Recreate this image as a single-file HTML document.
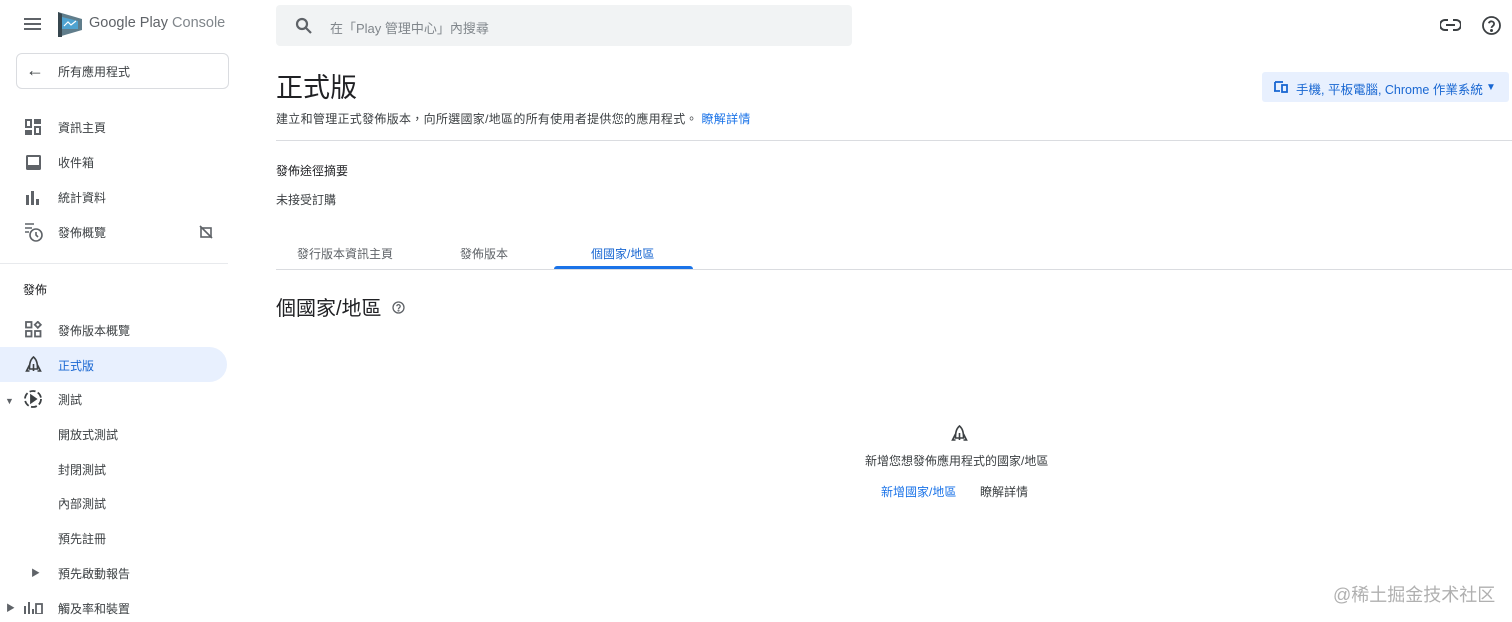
<!DOCTYPE html>
<html><head><meta charset="utf-8"><style>
*{margin:0;padding:0;box-sizing:border-box}
body{width:1512px;height:622px;overflow:hidden;background:#fff;font-family:"Liberation Sans","Noto Sans CJK TC",sans-serif;color:#3c4043;position:relative}
.a{position:absolute;white-space:nowrap}
.nav{font-size:12px;color:#3c4043}
.ic{position:absolute}
</style></head><body>
<svg class="ic" style="left:24px;top:17px" width="18" height="14"><rect y="1" width="17" height="2" fill="#5f6368"/><rect y="6" width="17" height="2" fill="#5f6368"/><rect y="11" width="17" height="2" fill="#5f6368"/></svg>
<svg class="ic" style="left:57px;top:11px" width="26" height="27"><path d="M1 1 L25 8 L25 19 L1 26Z" fill="#607d8b"/><path d="M5 6 L21 10 L21 18 L5 18Z" fill="#4fa3d1"/><path d="M7 15 L11 11 L14 14 L19 10" stroke="#fff" stroke-width="1.2" fill="none"/><path d="M1 1 L1 26 L5 26 L5 3Z" fill="#37474f"/></svg>
<div class="a" style="left:89px;top:15px;font-size:14.5px;color:#5f6368">Google Play <span style="color:#80868b">Console</span></div>
<div class="a" style="left:16px;top:53px;width:213px;height:36px;border:1px solid #dadce0;border-radius:6px"></div>
<div class="a" style="left:26px;top:60px;font-size:18px;color:#3c4043">←</div>
<div class="a nav" style="left:58px;top:63px">所有應用程式</div>
<svg class="ic" style="left:25px;top:119px" width="17" height="17" fill="#5f6368"><rect x="0" y="0" width="7" height="9"/><rect x="9" y="0" width="7" height="5"/><rect x="0" y="11" width="7" height="5"/><rect x="9" y="7" width="7" height="9"/><rect x="2" y="2" width="3" height="5" fill="#fff"/><rect x="11" y="9" width="3" height="5" fill="#fff"/></svg>
<div class="a nav" style="left:58px;top:119px">資訊主頁</div>
<svg class="ic" style="left:25px;top:154px" width="17" height="17"><rect x="1" y="1" width="15" height="15" rx="1.5" fill="#5f6368"/><rect x="3" y="3" width="11" height="8" fill="#fff"/></svg>
<div class="a nav" style="left:58px;top:154px">收件箱</div>
<svg class="ic" style="left:25px;top:189px" width="17" height="17" fill="#5f6368"><rect x="1" y="6" width="3" height="10"/><rect x="6" y="2" width="3" height="14"/><rect x="11" y="10" width="3" height="6"/></svg>
<div class="a nav" style="left:58px;top:189px">統計資料</div>
<svg class="ic" style="left:24px;top:222px" width="21" height="21" fill="none" stroke="#5f6368" stroke-width="1.6"><path d="M1 2h9M1 6h7M1 10h4"/><circle cx="12" cy="13" r="6"/><path d="M12 10v3l2 2"/></svg>
<div class="a nav" style="left:58px;top:224px">發佈概覽</div>
<svg class="ic" style="left:199px;top:225px" width="14" height="14" fill="none" stroke="#5f6368" stroke-width="1.6"><rect x="2" y="3" width="10" height="9"/><path d="M1 1l12 12"/></svg>
<div class="a" style="left:0;top:263px;width:228px;height:1px;background:#e8eaed"></div>
<div class="a nav" style="left:23px;top:281px;color:#202124">發佈</div>
<svg class="ic" style="left:25px;top:321px" width="17" height="17" fill="none" stroke="#5f6368" stroke-width="1.8"><rect x="1" y="1" width="5.5" height="5.5"/><rect x="1" y="10" width="5.5" height="5.5"/><rect x="10" y="10" width="5.5" height="5.5"/><path d="M12.8 0.8l3 3-3 3-3-3z"/></svg>
<div class="a nav" style="left:58px;top:322px">發佈版本概覽</div>
<div class="a" style="left:0;top:347px;width:227px;height:35px;background:#e8f0fe;border-radius:0 18px 18px 0"></div>
<svg class="ic" style="left:25px;top:356px" width="17" height="17" fill="none" stroke="#3c4043" stroke-width="1.6"><path d="M8.5 1C5 4 4.5 8 4.5 13h8c0-5-.5-9-4-12z"/><path d="M4.5 9L1.5 15h3M12.5 9l3 6h-3M8.5 8v7"/></svg>
<div class="a nav" style="left:58px;top:357px;color:#1967d2">正式版</div>
<div class="a" style="left:5px;top:396px;font-size:9px;color:#5f6368">▼</div>
<svg class="ic" style="left:23px;top:389px" width="20" height="20" fill="none" stroke="#3c4043" stroke-width="1.8"><circle cx="10" cy="10" r="8" stroke-dasharray="6 2.5"/><path d="M8 6.5v7l5-3.5z" fill="#3c4043"/></svg>
<div class="a nav" style="left:58px;top:391px">測試</div>
<div class="a nav" style="left:58px;top:426px">開放式測試</div>
<div class="a nav" style="left:58px;top:461px">封閉測試</div>
<div class="a nav" style="left:58px;top:495px">內部測試</div>
<div class="a nav" style="left:58px;top:530px">預先註冊</div>
<div class="a" style="left:31px;top:566px;font-size:9px;color:#5f6368">▶</div>
<div class="a nav" style="left:58px;top:565px">預先啟動報告</div>
<div class="a" style="left:6px;top:601px;font-size:9px;color:#5f6368">▶</div>
<svg class="ic" style="left:23px;top:600px" width="20" height="14" fill="#5f6368"><rect x="1" y="6" width="2" height="8"/><rect x="5" y="2" width="2" height="12"/><rect x="9" y="9" width="2" height="5"/><rect x="13" y="4" width="6" height="10" fill="none" stroke="#5f6368" stroke-width="1.8"/></svg>
<div class="a nav" style="left:58px;top:600px">觸及率和裝置</div>
<div class="a" style="left:276px;top:5px;width:576px;height:41px;background:#f1f3f4;border-radius:4px"></div>
<svg class="ic" style="left:295px;top:17px" width="18" height="18" fill="none" stroke="#5f6368" stroke-width="2.2"><circle cx="7" cy="7" r="5"/><path d="M11 11l5 5"/></svg>
<div class="a" style="left:330px;top:18px;font-size:13px;color:#80868b">在「Play 管理中心」內搜尋</div>
<svg class="ic" style="left:1440px;top:18px" width="21" height="14" fill="none" stroke="#3c4043" stroke-width="2"><path d="M8 2H5a5 5 0 000 10h3M13 2h3a5 5 0 010 10h-3M6 7h9"/></svg>
<svg class="ic" style="left:1481px;top:15px" width="21" height="21" fill="none" stroke="#3c4043" stroke-width="1.8"><circle cx="10.5" cy="10.5" r="8.5"/><path d="M7.8 8.3a2.7 2.7 0 015.3.6c0 2-2.6 2.2-2.6 4" /><circle cx="10.5" cy="15.5" r=".6" fill="#3c4043"/></svg>
<div class="a" style="left:276px;top:66px;font-size:27px;color:#202124">正式版</div>
<div class="a" style="left:276px;top:110px;font-size:12px;color:#3c4043;letter-spacing:.3px">建立和管理正式發佈版本，向所選國家/地區的所有使用者提供您的應用程式。 <span style="color:#1a73e8">瞭解詳情</span></div>
<div class="a" style="left:1262px;top:72px;width:247px;height:30px;background:#e8f0fe;border-radius:3px"></div>
<svg class="ic" style="left:1273px;top:81px" width="15" height="12" fill="none" stroke="#1967d2" stroke-width="1.8"><path d="M2 1v9M1 10h6"/><path d="M2 1h8"/><rect x="9" y="4" width="5" height="7"/></svg>
<div class="a" style="left:1296px;top:79px;font-size:12.5px;color:#1967d2">手機, 平板電腦, Chrome 作業系統</div>
<div class="a" style="left:1486px;top:82px;font-size:10px;color:#1967d2">▼</div>
<div class="a" style="left:276px;top:140px;width:1236px;height:1px;background:#dadce0"></div>
<div class="a" style="left:276px;top:162px;font-size:12px;color:#202124">發佈途徑摘要</div>
<div class="a" style="left:276px;top:191px;font-size:12px;color:#3c4043">未接受訂購</div>
<div class="a" style="left:297px;top:245px;font-size:12px;color:#5f6368">發行版本資訊主頁</div>
<div class="a" style="left:460px;top:245px;font-size:12px;color:#5f6368">發佈版本</div>
<div class="a" style="left:591px;top:245px;font-size:12px;color:#1967d2">個國家/地區</div>
<div class="a" style="left:276px;top:269px;width:1236px;height:1px;background:#dadce0"></div>
<div class="a" style="left:554px;top:266px;width:139px;height:3px;background:#1a73e8;border-radius:3px 3px 0 0"></div>
<div class="a" style="left:276px;top:292px;font-size:20px;color:#202124">個國家/地區</div>
<svg class="ic" style="left:392px;top:301px" width="13" height="13" fill="none" stroke="#5f6368" stroke-width="1.3"><circle cx="6.5" cy="6.5" r="5.5"/><path d="M4.8 5.2a1.7 1.7 0 013.4.3c0 1.2-1.7 1.3-1.7 2.5"/><circle cx="6.5" cy="9.6" r=".4"/></svg>
<svg class="ic" style="left:951px;top:425px" width="17" height="17" fill="none" stroke="#3c4043" stroke-width="1.6"><path d="M8.5 1C5 4 4.5 8 4.5 13h8c0-5-.5-9-4-12z"/><path d="M4.5 9L1.5 15h3M12.5 9l3 6h-3M8.5 8v7"/></svg>
<div class="a" style="left:865px;top:452px;font-size:12px;color:#3c4043">新增您想發佈應用程式的國家/地區</div>
<div class="a" style="left:881px;top:483px;font-size:12px;color:#1a73e8">新增國家/地區</div>
<div class="a" style="left:980px;top:483px;font-size:12px;color:#3c4043">瞭解詳情</div>
<div class="a" style="left:1333px;top:581px;font-size:18px;color:#b0b0b0">@稀土掘金技术社区</div>
</body></html>
